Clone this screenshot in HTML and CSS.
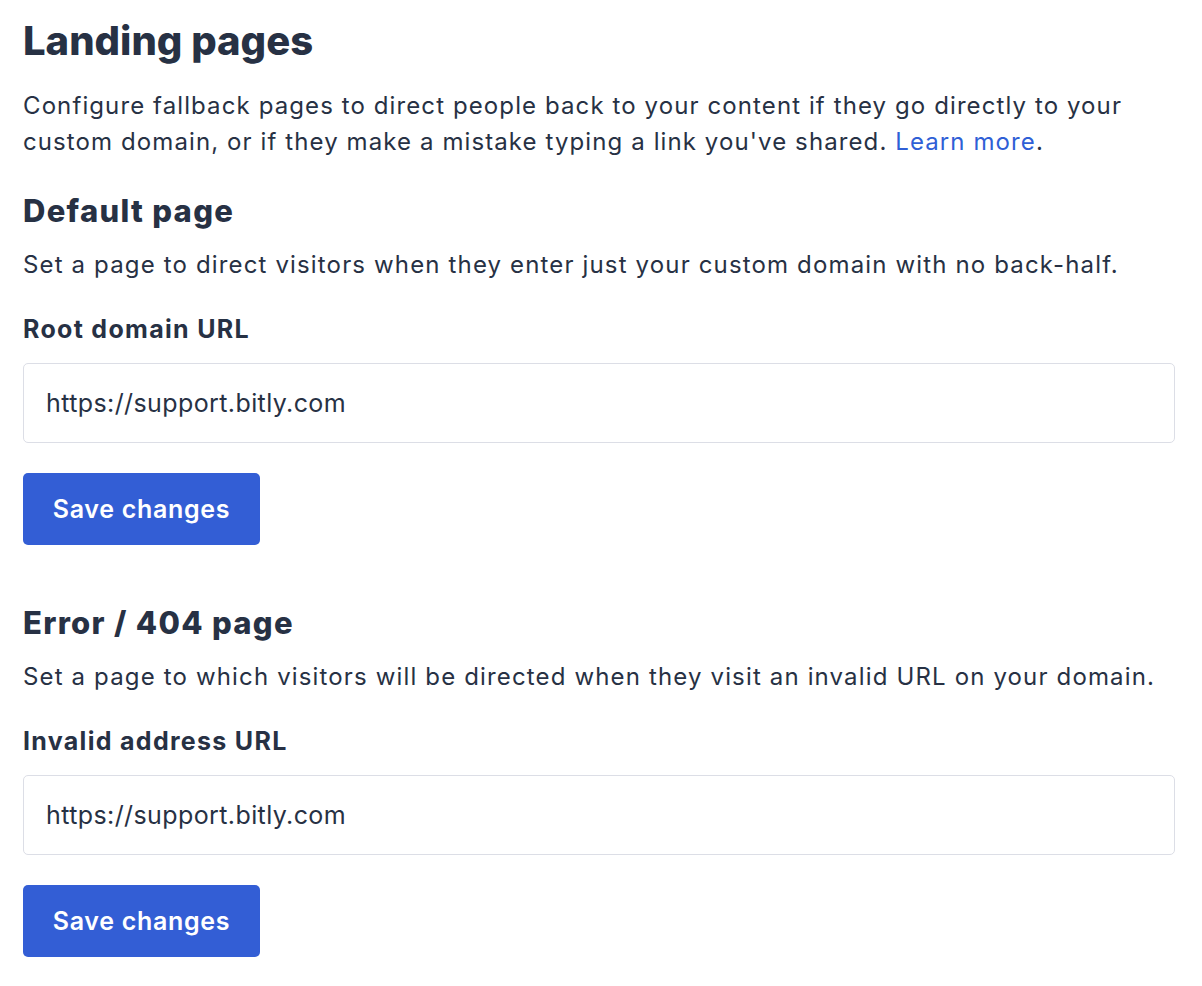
FILE: index.html
```html
<!DOCTYPE html>
<html lang="en">
<head>
<meta charset="utf-8">
<title>Landing pages</title>
<link rel="stylesheet" href="styles.css">
</head>
<body>
<main class="page">
  <h1 class="title">Landing pages</h1>
  <p class="intro">Configure fallback pages to direct people back to your content if they go directly to your custom domain, or if they make a mistake typing a link you've shared. <a class="link" href="#">Learn more</a>.</p>

  <section class="section section-default">
    <h2 class="section-title">Default page</h2>
    <p class="section-desc">Set a page to direct visitors when they enter just your custom domain with no back-half.</p>
    <label class="field-label" for="root-url">Root domain URL</label>
    <input class="field-input" id="root-url" type="text" value="https://support.bitly.com">
    <button class="btn-primary" type="button">Save changes</button>
  </section>

  <section class="section section-error">
    <h2 class="section-title">Error / 404 page</h2>
    <p class="section-desc">Set a page to which visitors will be directed when they visit an invalid URL on your domain.</p>
    <label class="field-label" for="invalid-url">Invalid address URL</label>
    <input class="field-input" id="invalid-url" type="text" value="https://support.bitly.com">
    <button class="btn-primary" type="button">Save changes</button>
  </section>
</main>
</body>
</html>
```

FILE: styles.css
```css
* {
  box-sizing: border-box;
}

html, body {
  margin: 0;
  padding: 0;
  background: #ffffff;
}

body {
  font-family: "Inter", "Open Sans", sans-serif;
  color: #273144;
}

.page {
  display: flex;
  flex-direction: column;
  padding: 16px 27px 0 23px;
}

.title {
  margin: 0;
  font-size: 40px;
  line-height: 50px;
  font-weight: 800;
  color: #273144;
}

.intro {
  margin: 22px 0 0;
  font-size: 24px;
  line-height: 36px;
  letter-spacing: 1.1px;
}

.link {
  color: #2f5fd6;
  text-decoration: none;
}

.section {
  display: flex;
  flex-direction: column;
  align-items: flex-start;
}

.section-default {
  margin-top: 33px;
}

.section-error {
  margin-top: 60px;
}

.section-title {
  margin: 0;
  font-size: 31px;
  line-height: 36px;
  font-weight: 800;
  letter-spacing: 1.3px;
}

.section-desc {
  margin: 18px 0 0;
  font-size: 24px;
  line-height: 36px;
  letter-spacing: 1.15px;
}

.field-label {
  margin-top: 31px;
  font-size: 25px;
  line-height: 30px;
  font-weight: 700;
  letter-spacing: 1.3px;
}

.field-input {
  margin-top: 19px;
  width: 100%;
  height: 80px;
  padding: 0 22px;
  border: 1px solid #dcdee6;
  border-radius: 5px;
  font-family: inherit;
  font-size: 25px;
  letter-spacing: 0.4px;
  color: #273144;
  background: #ffffff;
  outline: none;
}

.btn-primary {
  margin-top: 30px;
  width: 237px;
  height: 72px;
  border: none;
  border-radius: 5px;
  background: #335ed5;
  color: #ffffff;
  font-family: inherit;
  font-size: 25px;
  font-weight: 600;
  letter-spacing: 0.7px;
  cursor: pointer;
}
```
